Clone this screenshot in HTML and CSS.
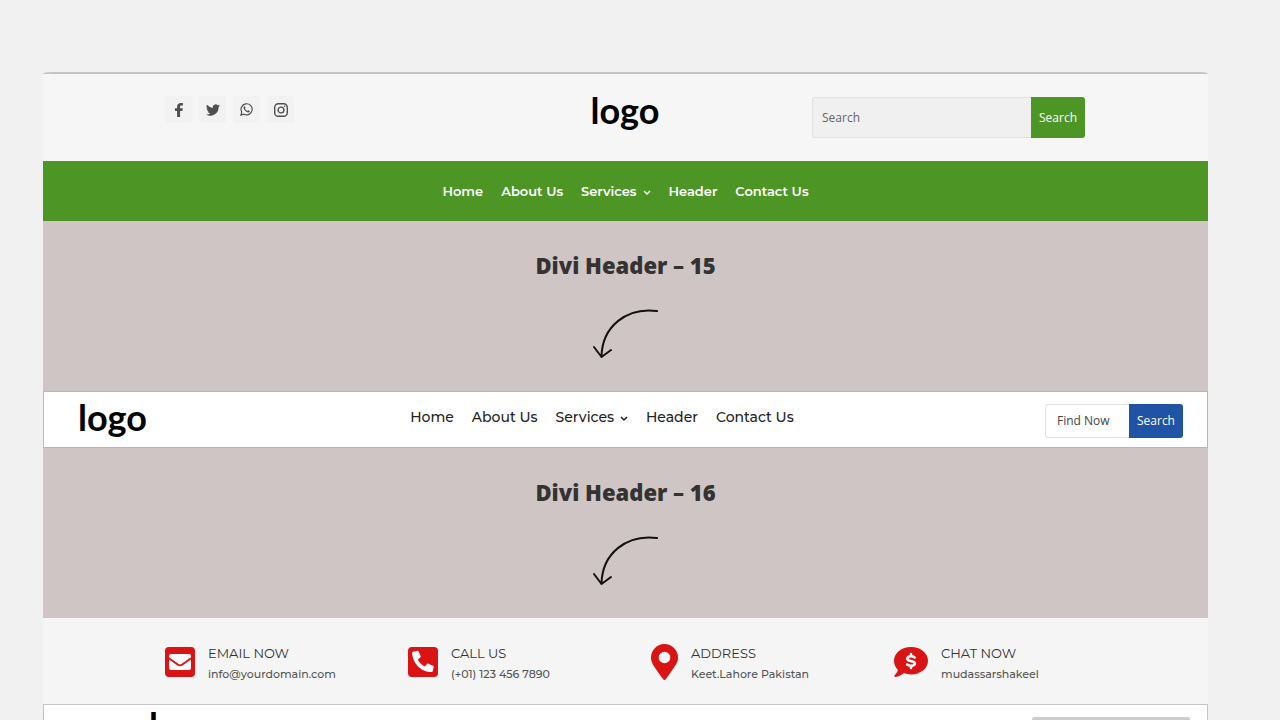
FILE: index.html
```html
<!DOCTYPE html>
<html lang="en">
<head>
<meta charset="utf-8">
<meta name="viewport" content="width=device-width, initial-scale=1">
<title>Divi Headers</title>
<link rel="stylesheet" href="styles.css">
</head>
<body>
<main class="showcase">
  <header class="topbar">
    <div class="social">
      <a href="#" aria-label="Facebook"><svg width="14" height="14" viewBox="0 0 14 14"><path fill="currentColor" d="M5.100 14V8H3V5.300h2.100V3.700C5.100 1.300 6.500 0 8.900 0c.9 0 1.700.1 2 .1v2.500H9.500c-1.100 0-1.400.5-1.400 1.300v1.400h2.700L10.400 8H8.100v6z"/></svg></a>
      <a href="#" aria-label="Twitter"><svg width="14" height="14" viewBox="0 0 24 24"><path fill="currentColor" d="M24 4.600a10 10 0 0 1-2.800.8 5 5 0 0 0 2.100-2.700 10 10 0 0 1-3.100 1.200 4.900 4.900 0 0 0-8.400 4.500A14 14 0 0 1 1.700 3.200a4.900 4.900 0 0 0 1.500 6.500 5 5 0 0 1-2.200-.6 4.900 4.900 0 0 0 3.900 4.900 5 5 0 0 1-2.200.1 4.900 4.900 0 0 0 4.600 3.400A10 10 0 0 1 0 19.500a14 14 0 0 0 21.500-12.400A10 10 0 0 0 24 4.600z"/></svg></a>
      <a href="#" aria-label="WhatsApp"><svg width="13" height="13" viewBox="0 0 24 24"><path fill="none" stroke="currentColor" stroke-width="2.200" d="M1.700 22.300l1.500-5.600a10.300 10.300 0 1 1 4 4z"/><path fill="currentColor" d="M8 6c-1.500.8-1.900 2.500-1 4.500 1.300 3.200 4.300 6 7.700 6.900 1.800.4 3.500-.8 3.400-2.600l-3-1.600-1.500 1.700c-2-.8-3.600-2.300-4.500-4.200l1.100-1.500L9 6z"/></svg></a>
      <a href="#" aria-label="Instagram"><svg width="14" height="14" viewBox="0 0 14 14" fill="none" stroke="currentColor" stroke-width="1.400"><rect x=".7" y=".7" width="12.600" height="12.600" rx="3.600"/><circle cx="7" cy="7" r="2.900"/><circle cx="10.700" cy="3.300" r=".8" fill="currentColor" stroke="none"/></svg></a>
    </div>
    <a class="logo" href="#">logo</a>
    <form class="search search-green">
      <input type="search" placeholder="Search" aria-label="Search">
      <button type="button">Search</button>
    </form>
  </header>
  <nav class="menu menu-green" aria-label="Header 14">
    <a href="#">Home</a>
    <a href="#">About Us</a>
    <a href="#">Services<svg class="chevron" width="8" height="6" viewBox="0 0 8 6"><path d="M1 1l3 3 3-3"/></svg></a>
    <a href="#">Header</a>
    <a href="#">Contact Us</a>
  </nav>
  <section class="divider">
    <h2>Divi Header – 15</h2>
    <svg class="arrow" width="66" height="50" viewBox="0 0 66 50"><path d="M64 2C34-2 9 17 8.500 48M1 38l7.500 10 9.500-7"/></svg>
  </section>
  <header class="inline-header">
    <a class="logo" href="#">logo</a>
    <nav class="menu menu-light" aria-label="Header 15">
      <a href="#">Home</a>
      <a href="#">About Us</a>
      <a href="#">Services<svg class="chevron" width="8" height="6" viewBox="0 0 8 6"><path d="M1 1l3 3 3-3"/></svg></a>
      <a href="#">Header</a>
      <a href="#">Contact Us</a>
    </nav>
    <form class="search search-blue">
      <input type="search" placeholder="Find Now" aria-label="Find now">
      <button type="button">Search</button>
    </form>
  </header>
  <section class="divider">
    <h2>Divi Header – 16</h2>
    <svg class="arrow" width="66" height="50" viewBox="0 0 66 50"><path d="M64 2C34-2 9 17 8.500 48M1 38l7.500 10 9.500-7"/></svg>
  </section>
  <section class="contacts">
    <div class="contact">
      <svg width="30" height="30" viewBox="0 0 30 30"><rect width="30" height="30" rx="4" fill="#da1414"/><path fill="#fff" d="M6 7h18c1 0 2 .8 2 2v1.300l-9.300 6.500c-1 .8-2.400.8-3.400 0L4 10.300V9c0-1.200 1-2 2-2zM4 12.600l8.500 5.900c1.500 1 3.500 1 5 0l8.500-5.900V21c0 1.200-.8 2-2 2H6c-1.200 0-2-.8-2-2z"/></svg>
      <div><h3>EMAIL NOW</h3><p>info@yourdomain.com</p></div>
    </div>
    <div class="contact">
      <svg width="30" height="30" viewBox="0 0 30 30"><rect width="30" height="30" rx="4" fill="#da1414"/><path fill="#fff" d="M5 4.800l4.400-1c.5-.1 1 .2 1.200.6l2 4.700c.2.500.1 1-.3 1.300l-2.500 2c1.500 3.100 4 5.600 7.100 7.100l2.100-2.500c.3-.4.800-.5 1.300-.3l4.800 2c.4.200.7.700.6 1.200l-1 4.400c-.1.500-.5.800-1 .8C13 25.100 4.200 16 4.200 5.800c0-.5.300-.9.800-1z"/></svg>
      <div><h3>CALL US</h3><p>(+01) 123 456 7890</p></div>
    </div>
    <div class="contact">
      <svg width="27" height="36" viewBox="0 0 27 36"><path fill="#da1414" fill-rule="evenodd" d="M12 35C2 21 0 18.500 0 13.500a13.500 13.500 0 0 1 27 0C27 18.500 25 21 15 35c-.8 1.200-2.200 1.200-3 0zM13.500 19.300a5.800 5.800 0 1 0 0-11.600 5.800 5.800 0 0 0 0 11.600z"/></svg>
      <div><h3>ADDRESS</h3><p>Keet.Lahore Pakistan</p></div>
    </div>
    <div class="contact">
      <svg width="34" height="30" viewBox="0 0 34 30"><path fill="#da1414" d="M17 0c9.400 0 17 6.100 17 13.700s-7.600 13.700-17 13.700c-2.600 0-5-.5-7.100-1.300C8 27.600 4.800 30 1.500 30c-1.400 0-1.300-1.200-.8-1.800 1.400-1.500 2.700-3.300 3.200-5.300C1.500 20.500 0 17.200 0 13.700 0 6.100 7.600 0 17 0z"/><path fill="none" stroke="#fff" stroke-width="2.600" stroke-linecap="round" d="M20.600 10.400c-1-.8-2.200-1.100-3.600-1.100-4.500 0-4.700 3.800-1.200 4.500l2.600.6c3.800.8 3 4.300-1.400 4.300-1.600 0-2.900-.4-3.900-1.200M17 7v2M17 19v2"/></svg>
      <div><h3>CHAT NOW</h3><p>mudassarshakeel</p></div>
    </div>
  </section>
  <header class="next-header">
    <a class="logo" href="#">logo</a>
    <div class="field"></div>
  </header>
</main>
</body>
</html>
```
FILE: styles.css
```css
* { box-sizing: border-box; }
body {
  margin: 0;
  height: 100vh;
  overflow: hidden;
  background: #f1f1f1;
  font-family: Montserrat, Inter, sans-serif;
}
a { color: inherit; text-decoration: none; }
h2, h3, p { margin: 0; }
.showcase { margin: 72px 72px 0 43px; }

.topbar {
  display: grid;
  grid-template-columns: 1fr auto 1fr;
  align-items: start;
  height: 89px;
  padding: 22px 123px 0 122px;
  border-top: 2px solid #c4c4c4;
  border-radius: 8px 8px 0 0 / 2px 2px 0 0;
  background: #f6f6f6;
}
.social { display: flex; gap: 7px; color: #4f4f4f; }
.social a {
  display: grid;
  place-items: center;
  width: 27px;
  height: 27px;
  background: #f2f2f2;
  border-radius: 2px;
}
.logo {
  color: #000;
  font: 700 36px/28px Lato, sans-serif;
}

.search { display: flex; font: 12px/18px "Open Sans", sans-serif; }
.search input {
  flex: 1;
  min-width: 0;
  border: 1px solid #e0e0e0;
  border-right: 0;
  border-radius: 3px 0 0 3px;
  font: inherit;
  appearance: none;
}
.search input::placeholder { color: #666; opacity: 1; }
.search button {
  padding: 0 8px;
  border: 0;
  border-radius: 0 3px 3px 0;
  color: #fff;
  font: inherit;
}
.search-green { justify-self: end; width: 273px; height: 41px; margin-top: 1px; }
.search-green input { padding: 0 9px; background: #f0f0f0; }
.search-green button { background: #4d9626; }
.search-blue { width: 138px; height: 34px; }
.search-blue input { padding: 0 0 0 11px; background: #fff; }
.search-blue input::placeholder { color: #444; }
.search-blue button { background: #2053a4; }

.menu {
  display: flex;
  align-items: center;
  justify-content: center;
  gap: 19px;
}
.chevron {
  margin-left: 6px;
  fill: none;
  stroke: currentColor;
  stroke-width: 1.5;
}
.menu-green {
  gap: 18px;
  height: 60px;
  background: #4d9626;
  color: #fff;
  font-size: 13px;
  font-weight: 600;
}
.menu-light { gap: 18px; padding-bottom: 8px; color: #222; font-size: 14px; font-weight: 500; }

.divider {
  display: flex;
  flex-direction: column;
  align-items: center;
  gap: 28px;
  height: 170px;
  padding-top: 28px;
  background: #cfc5c5;
}
.divider h2 {
  color: #333;
  font: 800 22px/32px "Open Sans", sans-serif;
}
.arrow { fill: none; stroke: #151011; stroke-width: 2; stroke-linecap: round; stroke-linejoin: round; }

.inline-header {
  display: flex;
  align-items: center;
  justify-content: space-between;
  height: 57px;
  padding: 2px 24px 0 34px;
  border: 1px solid #bbb5b5;
  background: #fff;
}
.inline-header .logo { margin: 0 12px 8px 0; }

.contacts {
  display: grid;
  grid-template-columns: repeat(4, 1fr);
  align-items: center;
  height: 86px;
  padding: 2px 71px 0 122px;
  background: #f5f5f5;
}
.contact { display: flex; align-items: center; gap: 13px; white-space: nowrap; }
.contact svg { flex: none; }
.contact div { padding-top: 4px; }
.contact h3 { color: #333; font-size: 13px; line-height: 20px; font-weight: 400; }
.contact p { color: #555; font-size: 11px; line-height: 22px; font-weight: 500; }

.next-header {
  display: flex;
  align-items: start;
  justify-content: space-between;
  height: 60px;
  padding: 6px 17px 0 105px;
  border: 1px solid #c4c4c4;
  background: #fff;
}
.field { width: 158px; height: 36px; margin-top: 6px; border-radius: 3px; background: #ccc; }
```
